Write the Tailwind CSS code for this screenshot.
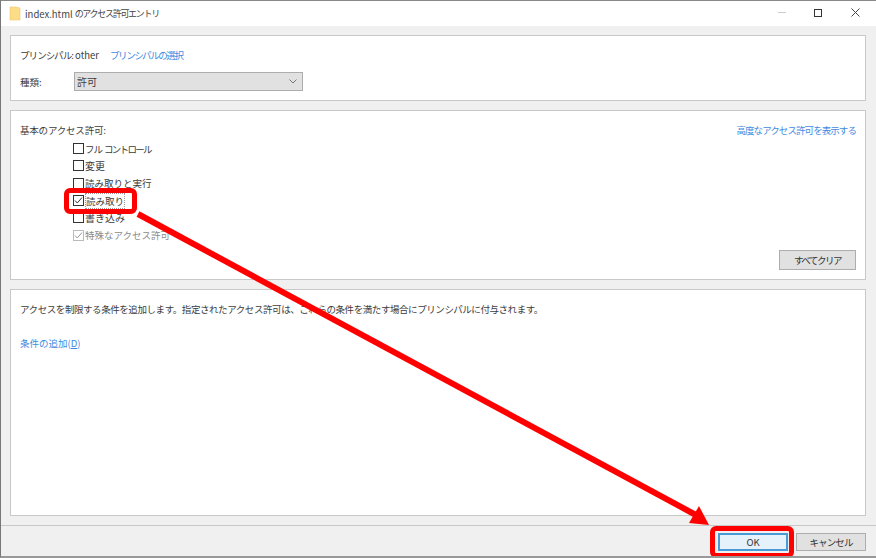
<!DOCTYPE html>
<html lang="ja">
<head>
  <meta charset="UTF-8" />
  <title>index.html のアクセス許可エントリ</title>
  <script src="https://cdn.jsdelivr.net/npm/@tailwindcss/browser@4"></script>
</head>
<body class="bg-white">
  <div class="relative w-[876px] h-[558px] overflow-hidden flex flex-col bg-[#f0f0f0] text-[9.5px] leading-[14px] text-[#3c3c3c] font-['Noto_Sans_CJK_JP','Noto_Sans',sans-serif] border-l border-l-[#777] border-t border-t-[#888] border-b-2 border-b-[#999]">

    <!-- Title bar -->
    <div class="h-[25px] shrink-0 bg-white flex items-center pl-[8px]">
      <svg class="w-[12px] h-[15px]" viewBox="0 0 12 15"><path d="M1 1h6l4 1v12H1z" fill="#fbdc87" stroke="#eecb70" stroke-width="0.6"/></svg>
      <span class="ml-[4px] text-[#444]">index.html</span>
      <span class="ml-[2px] text-[9px] tracking-[-1.3px] text-[#444]">のアクセス許可エントリ</span>
      <div class="ml-auto flex items-center pr-[16px] mb-[2px]">
        <div class="w-[8px] h-px bg-[#ccc] mr-[28px]"></div>
        <div class="w-[8px] h-[8px] border border-[#333] mr-[29px]"></div>
        <svg class="w-[9px] h-[9px]" viewBox="0 0 9 9"><path d="M0.5 0.5l8 8M8.5 0.5l-8 8" stroke="#444" stroke-width="1" fill="none"/></svg>
      </div>
    </div>

    <!-- Content -->
    <div class="flex-1 flex flex-col gap-[9px] pt-[9px] pl-[9px] pr-[10px] pb-[9px]">

      <!-- Principal -->
      <section class="h-[66px] bg-white border border-[#c8c8c8] pl-[9px] pt-[12px]">
        <div class="flex items-center h-[14px]">
          <span class="tracking-[-0.9px]">プリンシパル:</span>
          <span class="ml-[2px]">other</span>
          <a class="ml-[11px] tracking-[-1.4px] text-[#3f8ae0]">プリンシパルの選択</a>
        </div>
        <div class="flex items-center mt-[10px]">
          <span class="w-[54px]">種類:</span>
          <div class="w-[229px] h-[19px] bg-[#e1e1e1] border border-[#adadad] flex items-center justify-between pl-[2px] pr-[5px]">
            <span class="text-[10px]">許可</span>
            <svg class="w-[8px] h-[5px]" viewBox="0 0 8 5"><path d="M0.5 0.5L4 4l3.5-3.5" stroke="#777" fill="none"/></svg>
          </div>
        </div>
      </section>

      <!-- Permissions -->
      <section class="relative h-[170px] bg-white border border-[#c8c8c8] pl-[9px] pt-[12px]">
        <div class="flex justify-between pr-[9px] h-[14px]">
          <span class="tracking-[-0.2px]">基本のアクセス許可:</span>
          <a class="tracking-[-0.93px] text-[#3f8ae0]">高度なアクセス許可を表示する</a>
        </div>
        <ul class="mt-[3px] ml-[53px] flex flex-col">
          <li class="flex items-center h-[17.3px] gap-[1px]">
            <span class="w-[11px] h-[11px] border border-[#333]"></span>
            <span class="tracking-[-1px]">フル</span>
            <span class="ml-[1px] tracking-[-1.7px]">コントロール</span>
          </li>
          <li class="flex items-center h-[17.3px] gap-[1px]"><span class="w-[11px] h-[11px] border border-[#333]"></span><span class="text-[10px]">変更</span></li>
          <li class="flex items-center h-[17.3px] gap-[1px]"><span class="w-[11px] h-[11px] border border-[#333]"></span>読み取りと実行</li>
          <li class="flex items-center h-[17.3px] gap-[1px]">
            <span class="w-[11px] h-[11px] border border-[#333] flex items-center justify-center">
              <svg class="w-[9px] h-[9px]" viewBox="0 0 9 9"><path d="M1 4.5l2.3 2.5L8 1.5" stroke="#333" fill="none"/></svg>
            </span>
            <span class="border border-dotted border-[#999]">読み取り</span>
          </li>
          <li class="flex items-center h-[17.3px] gap-[1px]"><span class="w-[11px] h-[11px] border border-[#333]"></span><span class="text-[10px]">書き込み</span></li>
          <li class="flex items-center h-[17.3px] gap-[1px] text-[#8a8a8a]">
            <span class="w-[11px] h-[11px] border border-[#bbb] flex items-center justify-center">
              <svg class="w-[9px] h-[9px]" viewBox="0 0 9 9"><path d="M1 4.5l2.3 2.5L8 1.5" stroke="#999" fill="none"/></svg>
            </span>
            特殊なアクセス許可
          </li>
        </ul>
        <button class="absolute right-[9px] bottom-[9px] w-[77px] h-[20px] bg-[#e1e1e1] border border-[#adadad] tracking-[-1.5px] text-[#333]">すべてクリア</button>
      </section>

      <!-- Conditions -->
      <section class="flex-1 bg-white border border-[#c8c8c8] pl-[9px] pt-[12px]">
        <p class="tracking-[-0.43px]">アクセスを制限する条件を追加します。指定されたアクセス許可は、これらの条件を満たす場合にプリンシパルに付与されます。</p>
        <a class="block mt-[20px] text-[#3f8ae0]">条件の追加(<span class="underline">D</span>)</a>
      </section>
    </div>

    <!-- Footer -->
    <div class="h-[31px] shrink-0 border-t border-[#c8c8c8] flex items-start justify-end gap-[8px] pt-[7px] pr-[10px]">
      <button class="w-[70px] h-[18px] bg-[#e5f1fb] border-2 border-[#4a9ad8] text-[#333]">OK</button>
      <button class="w-[70px] h-[18px] bg-[#e1e1e1] border border-[#adadad] tracking-[-0.9px] text-[#333]">キャンセル</button>
    </div>

    <!-- Annotations -->
    <div class="absolute left-[63px] top-[187px] w-[73px] h-[26px] border-[5px] border-[#ff0000] rounded-[6px]"></div>
    <div class="absolute left-[709px] top-[525px] w-[84px] h-[32px] border-[5px] border-[#ff0000] rounded-[6px]"></div>
    <svg class="absolute left-0 top-0 pointer-events-none" width="876" height="558" viewBox="0 0 876 558">
      <path d="M137 213L695 514" stroke="#ff0000" stroke-width="6" fill="none"/>
      <path d="M708 524L688 522L698 505z" fill="#ff0000"/>
    </svg>
  </div>
</body>
</html>
